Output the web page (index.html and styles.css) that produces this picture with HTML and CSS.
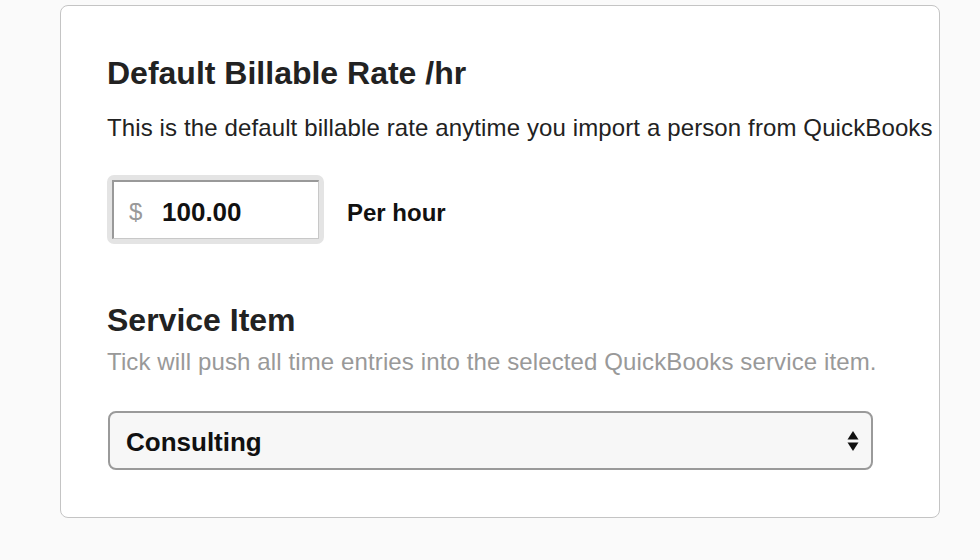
FILE: index.html
```html
<!DOCTYPE html>
<html lang="en">
<head>
  <meta charset="UTF-8">
  <title>QuickBooks Settings</title>
  <link rel="stylesheet" href="styles.css">
</head>
<body>

<div class="panel">
  <h2>Default Billable Rate /hr</h2>
  <p class="help">This is the default billable rate anytime you import a person from QuickBooks</p>

  <div class="rate-row">
    <div class="rate-box">
      <span class="currency">$</span>
      <input type="text" class="rate" value="100.00">
    </div>
    <span class="unit">Per hour</span>
  </div>

  <h2 class="service-title">Service Item</h2>
  <p class="help muted">Tick will push all time entries into the selected QuickBooks service item.</p>

  <div class="select-box">
    <span class="selected">Consulting</span>
    <svg class="arrows" width="12" height="22" viewBox="0 0 12 22">
      <path d="M6 1 L11.5 9.5 L0.5 9.5 Z" fill="#111"/>
      <path d="M6 21 L11.5 12.5 L0.5 12.5 Z" fill="#111"/>
    </svg>
  </div>
</div>

</body>
</html>
```

FILE: styles.css
```css
body {
  font-family: "Liberation Sans", Arial, sans-serif;
  background: #fafafa;
  color: #222;
  margin: 0;
  padding: 5px 0 0 60px;
}

.panel {
  width: 880px;
  height: 513px;
  box-sizing: border-box;
  background: white;
  border: 1.5px solid #c4c4c4;
  border-radius: 8px;
  padding: 49px 0 0 46px;
}

h2 {
  font-size: 32px;
  font-weight: bold;
  margin: 0;
  line-height: 37px;
  color: #222;
}

.help {
  font-size: 24px;
  margin: 22px 0 0;
  line-height: 28px;
  letter-spacing: 0.12px;
  white-space: nowrap;
}

.muted {
  color: #999;
  margin-top: 9px;
}

.rate-row {
  display: flex;
  align-items: center;
  gap: 23px;
  margin-top: 33px;
}

.rate-box {
  display: flex;
  align-items: stretch;
  width: 217px;
  height: 69px;
  box-sizing: border-box;
  border: 5px solid #e4e4e4;
  border-radius: 7px;
}

.rate-box .currency {
  display: flex;
  align-items: center;
  width: 50px;
  padding: 3px 0 0 15px;
  box-sizing: border-box;
  font-size: 24px;
  color: #999;
  background: white;
  border: 1px solid #c8c8c8;
  border-top: 2px solid #999;
  border-left: 2px solid #999;
  border-right: none;
}

.rate-box input {
  flex: 1;
  min-width: 0;
  box-sizing: border-box;
  padding: 4px 0 0;
  font-family: inherit;
  font-size: 26px;
  font-weight: bold;
  color: #111;
  background: white;
  border: 1px solid #c8c8c8;
  border-top: 2px solid #999;
  border-left: none;
  outline: none;
}

.unit {
  padding-top: 6px;
  font-size: 24px;
  font-weight: bold;
  color: #111;
}

.service-title {
  margin-top: 58px;
}

.select-box {
  display: flex;
  align-items: center;
  justify-content: space-between;
  width: 765px;
  height: 59px;
  box-sizing: border-box;
  margin-top: 35px;
  margin-left: 1px;
  padding: 0 12px 0 16px;
  background: #f7f7f7;
  border: 2px solid #9a9a9a;
  border-radius: 8px;
}

.selected {
  padding-top: 4px;
  font-size: 26px;
  font-weight: bold;
  color: #111;
}
```
